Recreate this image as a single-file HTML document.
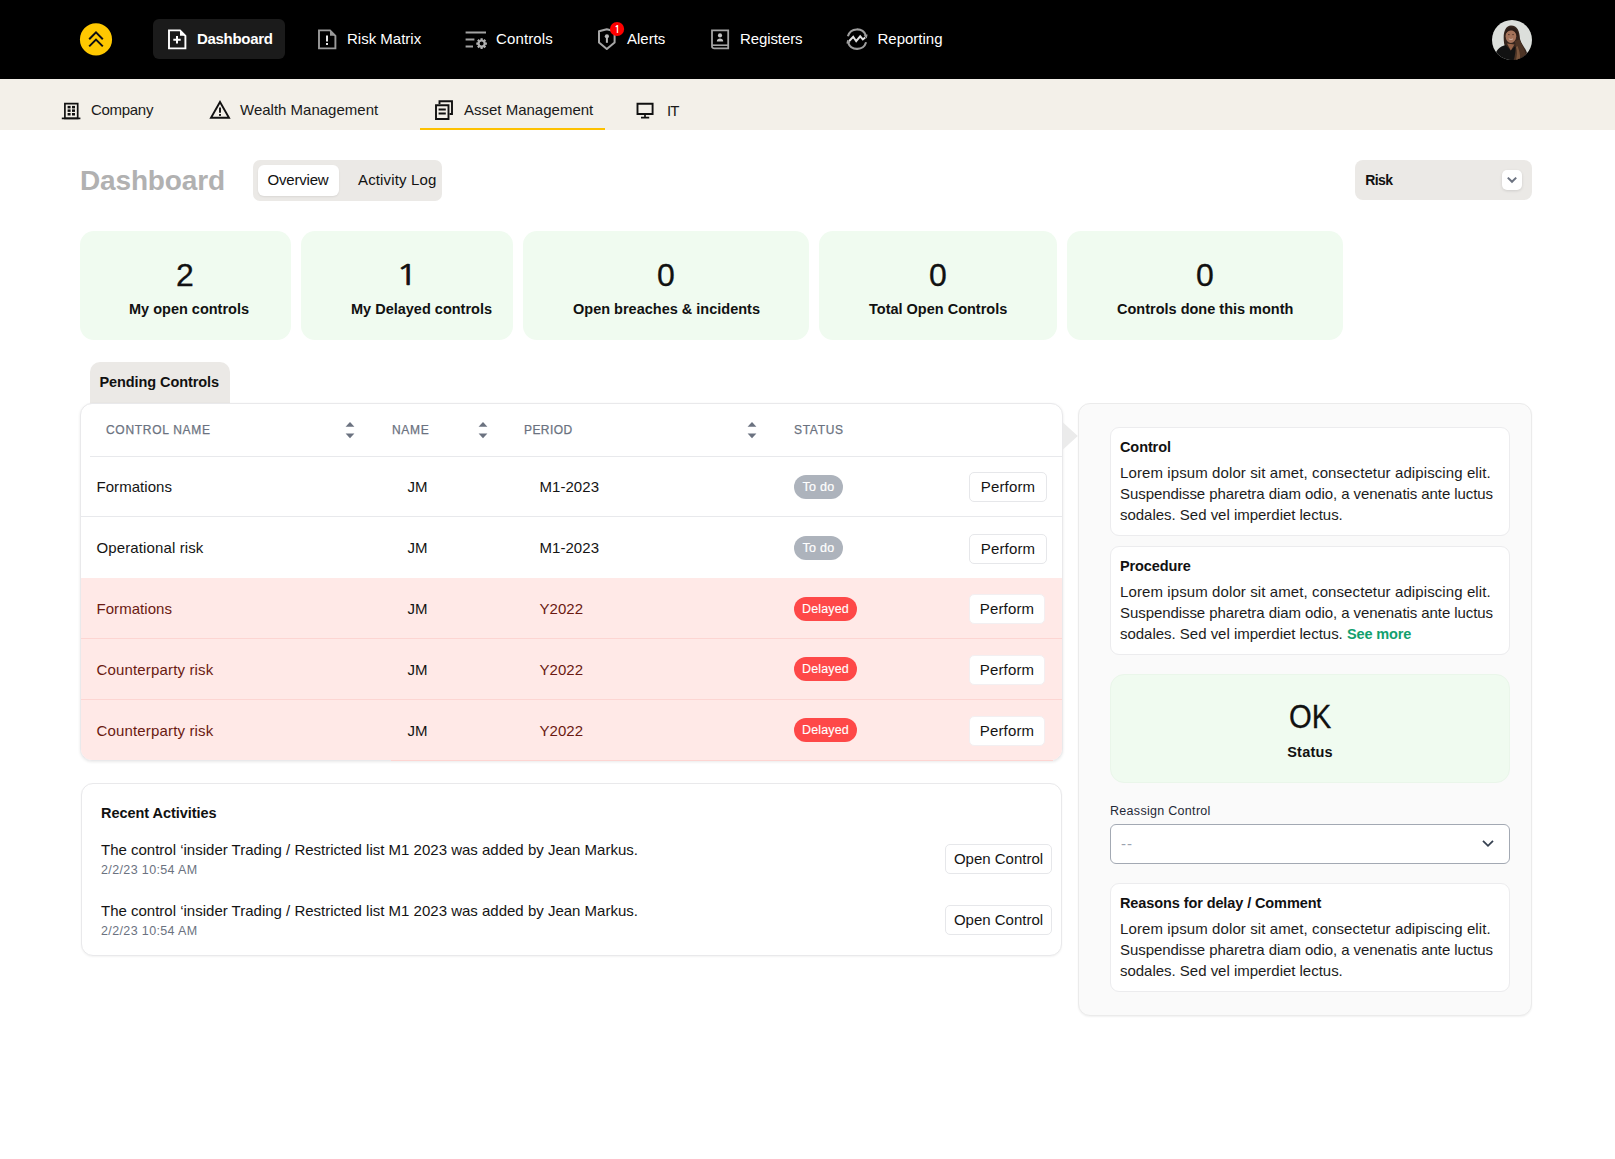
<!DOCTYPE html>
<html lang="en">
<head>
<meta charset="utf-8">
<title>Dashboard</title>
<style>
*{box-sizing:border-box;margin:0;padding:0}
html,body{width:1615px;height:1159px;overflow:hidden;background:#fff}
body{font-family:"Liberation Sans",Arial,sans-serif;color:#111;position:relative;font-size:15px}
.abs{position:absolute}
.t{position:absolute;white-space:nowrap;line-height:20px}
/* header */
#hdr{left:0;top:0;width:1615px;height:79px;background:#000}
#logo{left:80px;top:23px;width:32px;height:33px;overflow:visible}
.nav{color:#fff;font-size:15px;letter-spacing:0;top:29px}
.nav.b{font-weight:700;letter-spacing:-.3px}
#navact{left:153px;top:19px;width:132px;height:40px;border-radius:6px;background:#1b1b1b}
.ico{position:absolute}
/* sub nav */
#sub{left:0;top:79px;width:1615px;height:51px;background:#f3f0e9}
.sn{color:#1a1a1a;font-size:15px;letter-spacing:0;top:100px}
#sul{left:420px;top:128px;width:185px;height:2px;background:#fdc100}

/* main */
#ttl{left:80px;top:167px;font-size:28px;font-weight:700;color:#b1b1b1;line-height:28px;letter-spacing:-.15px}
#seg{left:253px;top:160px;width:189px;height:41px;border-radius:7px;background:#ebe9e6}
#segw{left:258px;top:165px;width:81px;height:31px;border-radius:6px;background:#fff;box-shadow:0 1px 2px rgba(0,0,0,.08)}
.f15{font-size:15px;line-height:15px}
.f145{font-size:14.500px;line-height:15px}
.bd{font-weight:700}
#rsk{left:1355px;top:160px;width:177px;height:40px;border-radius:8px;background:#ebe9e6}
#rskc{left:1502px;top:170px;width:20px;height:20px;border-radius:5px;background:#fff;box-shadow:0 1px 3px rgba(0,0,0,.12)}
.card{position:absolute;top:231px;height:109px;border-radius:14px;background:#f0fbf0}
.num{position:absolute;font-size:32px;line-height:32px;top:259px;text-align:center;color:#111;-webkit-text-stroke:.3px #111}
.lbl{position:absolute;font-size:14.500px;line-height:15px;font-weight:700;top:302px;white-space:nowrap;color:#111}

/* table */
#ptab{left:90px;top:362px;width:140px;height:44px;border-radius:10px 10px 0 0;background:#ebe9e6}
#tbl{left:80px;top:403px;width:983px;height:358px;border:1px solid #e9e9eb;border-radius:12px;background:#fff;box-shadow:0 1px 3px rgba(0,0,0,.09);overflow:hidden}
.pk{position:absolute;left:0;width:983px;background:#ffe9e7}
.ln{position:absolute;height:1px;background:#e8e9ec}
.lnp{position:absolute;height:1px;background:#fdd5d2;left:81px;width:981px}
.th{position:absolute;white-space:nowrap;font-size:12px;line-height:13px;top:424px;color:#6b7280;letter-spacing:.7px;font-weight:400;-webkit-text-stroke:.25px #6b7280}
.td{position:absolute;white-space:nowrap;font-size:15px;line-height:15px;color:#141414;letter-spacing:.05px}
.td.r{color:#6a1a12}
.bdg{position:absolute;height:24px;border-radius:12px;color:#fff;font-size:12.500px;line-height:24px;text-align:center;letter-spacing:.3px;white-space:nowrap}
.bdg.g{background:#adb3bc;width:49px;left:794px;-webkit-text-stroke:.2px #fff}
.bdg.d{background:#fe4848;width:63px;left:794px;letter-spacing:.15px;-webkit-text-stroke:.12px #fff}
.btn{position:absolute;height:30px;border-radius:5px;background:#fff;border:1px solid #e6e7ea;font-size:15px;line-height:28px;text-align:center;color:#141414;letter-spacing:.15px;white-space:nowrap}
.btn.oc{letter-spacing:0}
.btn.p{border-color:#f3eff1}

/* recent */
#rec{left:81px;top:783px;width:981px;height:173px;border:1px solid #e9e9eb;border-radius:12px;background:#fff;box-shadow:0 1px 2px rgba(0,0,0,.05)}
.dt{position:absolute;white-space:nowrap;font-size:12.500px;line-height:13px;color:#6b7280;letter-spacing:.37px;left:101px}
/* right panel */
#pan{left:1078px;top:403px;width:454px;height:613px;border:1px solid #ebebeb;border-radius:12px;background:#fafafa;box-shadow:0 1px 2px rgba(0,0,0,.06)}
.ic{position:absolute;left:1110px;width:400px;height:109px;border:1px solid #ececee;border-radius:9px;background:#fff}
.ih{position:absolute;left:1120px;white-space:nowrap;font-size:14.500px;line-height:15px;font-weight:700;color:#111;letter-spacing:-.1px}
.ib{position:absolute;left:1120px;white-space:nowrap;font-size:15px;line-height:21px;color:#1c1c1c;letter-spacing:.1px}
.ib i{font-style:normal;letter-spacing:-.07px}
.ib b{font-weight:400;letter-spacing:-.02px}
#okc{left:1110px;top:674px;width:400px;height:109px;border-radius:14px;background:#f0fbf0;border:1px solid #eaf6ea}
#sel{left:1110px;top:824px;width:400px;height:40px;border:1px solid #a3a9b3;border-radius:6px;background:#fff}
</style>
</head>
<body>
<!-- HEADER -->
<div id="hdr" class="abs"></div>
<div id="sub" class="abs"></div>
<svg id="logo" class="abs" viewBox="0 0 32 33"><circle cx="16" cy="16.400" r="16.050" fill="#ffc800"/><path d="M9.200 16.200 16 9.400 22.800 16.200M9.200 23.400 16 16.600 22.800 23.400" fill="none" stroke="#0d0d14" stroke-width="2" stroke-linejoin="miter"/></svg>
<div id="navact" class="abs"></div>
<div class="t nav b" style="left:197px">Dashboard</div>
<div class="t nav" style="left:347px">Risk Matrix</div>
<div class="t nav" style="left:496px;letter-spacing:.12px">Controls</div>
<div class="t nav" style="left:627px">Alerts</div>
<div class="t nav" style="left:740px;letter-spacing:-.1px">Registers</div>
<div class="t nav" style="left:877.500px">Reporting</div>

<!-- header icons -->
<svg class="ico" style="left:167px;top:28px" width="20" height="22" viewBox="0 0 20 22"><path d="M2 2.400H13L18.400 7.800V20.400H2Z" fill="none" stroke="#fff" stroke-width="1.900" stroke-linejoin="miter"/><path d="M13 2.400V7.800H18.400Z" fill="#fff"/><path d="M10 8v7.400M6.300 11.700h7.400" stroke="#fff" stroke-width="2" fill="none"/></svg>
<svg class="ico" style="left:317px;top:28px" width="20" height="22" viewBox="0 0 20 22"><path d="M2 2.400H13L18.400 7.800V20.400H2Z" fill="none" stroke="#9a9a9a" stroke-width="1.900"/><path d="M13 2.400V7.800H18.400Z" fill="#9a9a9a"/><path d="M10 7.500v6" stroke="#e6e6e6" stroke-width="2" fill="none"/><rect x="9" y="15" width="2" height="2" fill="#e6e6e6"/></svg>
<svg class="ico" style="left:464px;top:29px" width="26" height="22" viewBox="0 0 26 22"><path d="M1.600 3.400H22M1.600 10.600H10.400M1.600 17.400H9" stroke="#a3a3a3" stroke-width="2" fill="none"/><g transform="translate(17.600 14.600)"><circle r="3.100" fill="none" stroke="#b2b2b2" stroke-width="2.200"/><g stroke="#b2b2b2" stroke-width="2.200"><path d="M0-5.300V-3.500M0 5.300V3.500M-5.300 0H-3.500M5.300 0H3.500M-3.750-3.750-2.500-2.500M3.750 3.750 2.500 2.500M-3.750 3.750-2.500 2.500M3.750-3.750 2.500-2.500"/></g></g></svg>
<svg class="ico" style="left:596px;top:20px" width="30" height="32" viewBox="0 0 30 32"><path d="M10.800 9.300 18.600 11.300V22.400L10.800 29 3 22.400V11.300Z" fill="none" stroke="#a6a6a6" stroke-width="2" stroke-linejoin="round"/><circle cx="10.900" cy="16.300" r="2.100" fill="#b8b8b8"/><path d="M10.900 17v5.800" stroke="#b8b8b8" stroke-width="2"/><circle cx="21.060" cy="9" r="7.100" fill="#fe0000"/></svg>
<div class="t" style="left:613.200px;top:24px;width:8px;text-align:center;color:#fff;font-family:'NanumGothic','Liberation Sans',sans-serif;font-weight:700;font-size:10px;line-height:12px">1</div>
<svg class="ico" style="left:710px;top:28px" width="20" height="22" viewBox="0 0 20 22"><path d="M2 2.300H18.200V20.400H4.200C3 20.400 2 19.600 2 18.400Z" fill="none" stroke="#a3a3a3" stroke-width="1.800"/><path d="M2 17.200H18.200" stroke="#a3a3a3" stroke-width="1.600"/><circle cx="10" cy="7.400" r="2.100" fill="#c4c4c4"/><path d="M6.800 13.600C6.800 11.400 8.400 10.600 10 10.600 11.600 10.600 13.200 11.400 13.200 13.600Z" fill="#c4c4c4"/></svg>
<svg class="ico" style="left:845px;top:27px" width="24" height="24" viewBox="0 0 24 24"><path d="M2.900 9.200A9.500 9.500 0 0 1 20.900 8.600M21.100 15.200A9.500 9.500 0 0 1 3.100 15.600" fill="none" stroke="#9e9e9e" stroke-width="2.100"/><path d="M18.600 8.400 22.600 7.600 21.800 11.400Z M5.400 15.800 1.400 16.600 2.200 12.800Z" fill="#9e9e9e"/><path d="M4 14.200 8.200 9.800 11.200 14.200 15.200 9.400 17.800 12.400 20.200 10.400" fill="none" stroke="#e0e0e0" stroke-width="2" stroke-linejoin="miter"/></svg>
<!-- avatar -->
<svg class="ico" style="left:1492px;top:19.500px" width="40" height="40" viewBox="0 0 40 40"><defs><clipPath id="av"><circle cx="20" cy="20" r="20"/></clipPath></defs><g clip-path="url(#av)"><rect width="40" height="40" fill="#dcdfdb"/><path d="M12.200 24C10.500 13 13 6 19 5.600 25.500 5.600 27.500 11 28 19 29.500 25 33.500 27.500 35 33L36 42H18Z" fill="#35251d"/><ellipse cx="18.900" cy="16.200" rx="5.300" ry="6.700" fill="#a5735a"/><path d="M13.300 15C13 9 16.500 7.600 19.500 7.600 23.500 7.600 26 10.500 26.500 18 24.500 12.500 22 10.200 18.500 10.400 15.800 10.600 14 12.500 13.300 15Z" fill="#2a1c16"/><path d="M16.800 18.900Q18.900 20.300 21 18.900" stroke="#dcc9bf" stroke-width=".7" fill="none"/><path d="M16.100 14.600h1.500M20.300 14.600h1.500" stroke="#3a261d" stroke-width=".8"/><path d="M2 40C3 30 8 26.500 13.500 25L18.800 30.500 23 26.500 30 28 36 42Z" fill="#121212"/><path d="M15 23.500 18.800 30.500 22.500 24.500Q18.800 24 15 23.500Z" fill="#946348"/><path d="M22.600 21C24.500 26 23.500 34 21.500 41H34C34.500 31 30.500 26.500 27.500 19.500Z" fill="#4d3425"/><path d="M24 27C25.500 31 25 36 24 40H28C28.500 34 27 30 25.500 26Z" fill="#7a553c"/></g></svg>
<!-- subnav icons -->
<svg class="ico" style="left:61px;top:101px" width="20" height="19" viewBox="0 0 20 19"><path d="M3.900 2.700H16.700V17.300H3.900Z" fill="none" stroke="#111" stroke-width="1.700"/><path d="M.8 17.400H19.400" stroke="#111" stroke-width="1.700"/><g fill="#111"><rect x="6.6" y="4.9" width="3" height="2.500"/><rect x="6.6" y="8.4" width="3" height="2.500"/><rect x="6.6" y="12" width="3" height="2.500"/><rect x="11" y="4.9" width="3" height="2.500"/><rect x="11" y="8.4" width="3" height="2.500"/><rect x="11" y="12" width="3" height="2.500"/></g></svg>
<svg class="ico" style="left:208px;top:99px" width="24" height="21" viewBox="0 0 24 21"><path d="M12 3 21 18.800H3Z" fill="none" stroke="#111" stroke-width="1.900" stroke-linejoin="miter"/><path d="M12 8.600V13.800" stroke="#111" stroke-width="1.900"/><rect x="11.050" y="15" width="1.900" height="1.900" fill="#111"/></svg>
<svg class="ico" style="left:434px;top:99px" width="20" height="22" viewBox="0 0 20 22"><path d="M5.500 5V2.200H18V15H15.500" fill="none" stroke="#111" stroke-width="1.900"/><path d="M2 6.200H14.500V20H2Z" fill="none" stroke="#111" stroke-width="1.900"/><path d="M4.600 10.500H11.800M4.600 14.500H11.800" stroke="#111" stroke-width="1.800"/></svg>
<svg class="ico" style="left:635px;top:101px" width="20" height="19" viewBox="0 0 20 19"><path d="M2.500 2.700H17.600V13H2.500Z" fill="none" stroke="#111" stroke-width="1.900"/><path d="M10 13V16.600M6 16.700H14.200" stroke="#111" stroke-width="1.700"/></svg>
<!-- SUBNAV -->
<div class="t sn" style="left:91px;letter-spacing:-.3px">Company</div>
<div class="t sn" style="left:240px">Wealth Management</div>
<div class="t sn" style="left:464px">Asset Management</div>
<div class="t sn" style="left:667px;top:101px;letter-spacing:-1px">IT</div>
<div id="sul" class="abs"></div>

<div id="ttl" class="t">Dashboard</div>
<div id="seg" class="abs"></div><div id="segw" class="abs"></div>
<div class="t f15" style="left:267.500px;top:172px;letter-spacing:-.2px">Overview</div>
<div class="t f15" style="left:358px;top:172px;letter-spacing:.15px">Activity Log</div>
<div id="rsk" class="abs"></div><div id="rskc" class="abs"></div>
<div class="t bd" style="left:1365.300px;top:173px;font-size:14px;line-height:15px;letter-spacing:-.6px">Risk</div>
<svg class="ico" style="left:1502px;top:170px" width="20" height="20" viewBox="0 0 20 20"><path d="M5.800 7.600 10 11.800 14.200 7.600" fill="none" stroke="#6b7280" stroke-width="2"/></svg>
<!-- stat cards -->
<div class="card" style="left:80px;width:211px"></div>
<div class="card" style="left:301px;width:212px"></div>
<div class="card" style="left:523px;width:286px"></div>
<div class="card" style="left:819px;width:238px"></div>
<div class="card" style="left:1067px;width:276px"></div>
<div class="num" style="left:165px;width:40px">2</div>
<div class="num" style="width:40px;font-family:'NanumGothic','Liberation Sans',sans-serif;font-size:28.500px;top:259px;left:387px;-webkit-text-stroke:.6px #111;transform:scaleX(1.300)">1</div>
<div class="num" style="left:646px;width:40px">0</div>
<div class="num" style="left:918px;width:40px">0</div>
<div class="num" style="left:1185px;width:40px">0</div>
<div class="lbl" style="left:129px">My open controls</div>
<div class="lbl" style="left:351px">My Delayed controls</div>
<div class="lbl" style="left:573px">Open breaches &amp; incidents</div>
<div class="lbl" style="left:869px">Total Open Controls</div>
<div class="lbl" style="left:1117px">Controls done this month</div>

<div id="ptab" class="abs"></div>
<div class="t f145 bd" style="left:99.500px;top:375px;letter-spacing:-.09px">Pending Controls</div>
<div id="tbl" class="abs"><div class="pk" style="top:174px;height:190px"></div></div>
<div class="ln" style="left:90px;top:456px;width:972px"></div>
<div class="ln" style="left:81px;top:516px;width:981px"></div>
<div class="lnp" style="top:638px"></div>
<div class="lnp" style="top:699px"></div>
<div class="lnp" style="top:760px;left:391px;width:662px"></div>
<div class="th" style="left:106px">CONTROL NAME</div>
<div class="th" style="left:392px">NAME</div>
<div class="th" style="left:524px;letter-spacing:.42px">PERIOD</div>
<div class="th" style="left:794px">STATUS</div>
<svg class="ico" style="left:344px;top:421px" width="12" height="18" viewBox="0 0 12 18"><path d="M6 1 10.400 5.800H1.600Z" fill="#6b7280"/><path d="M6 17.200 10.400 12.400H1.600Z" fill="#6b7280"/></svg><svg class="ico" style="left:477px;top:421px" width="12" height="18" viewBox="0 0 12 18"><path d="M6 1 10.400 5.800H1.600Z" fill="#6b7280"/><path d="M6 17.200 10.400 12.400H1.600Z" fill="#6b7280"/></svg><svg class="ico" style="left:746px;top:421px" width="12" height="18" viewBox="0 0 12 18"><path d="M6 1 10.400 5.800H1.600Z" fill="#6b7280"/><path d="M6 17.200 10.400 12.400H1.600Z" fill="#6b7280"/></svg>
<div class="td" style="left:96.500px;top:479px">Formations</div><div class="td" style="left:407.500px;top:479px">JM</div><div class="td" style="left:539.500px;top:479px">M1-2023</div>
<div class="bdg g" style="top:475px">To do</div><div class="btn" style="left:969px;width:78px;top:472px">Perform</div>
<div class="td" style="left:96.500px;top:540px;letter-spacing:.12px">Operational risk</div><div class="td" style="left:407.500px;top:540px">JM</div><div class="td" style="left:539.500px;top:540px">M1-2023</div>
<div class="bdg g" style="top:536px">To do</div><div class="btn" style="left:969px;width:78px;top:534px">Perform</div>
<div class="td r" style="left:96.500px;top:601px">Formations</div><div class="td" style="left:407.500px;top:601px">JM</div><div class="td r" style="left:539.500px;top:601px">Y2022</div>
<div class="bdg d" style="top:597px">Delayed</div><div class="btn p" style="left:969px;width:76px;top:594px">Perform</div>
<div class="td r" style="left:96.500px;top:662px;letter-spacing:.16px">Counterparty risk</div><div class="td" style="left:407.500px;top:662px">JM</div><div class="td r" style="left:539.500px;top:662px">Y2022</div>
<div class="bdg d" style="top:657px">Delayed</div><div class="btn p" style="left:969px;width:76px;top:654.5px">Perform</div>
<div class="td r" style="left:96.500px;top:723px;letter-spacing:.16px">Counterparty risk</div><div class="td" style="left:407.500px;top:723px">JM</div><div class="td r" style="left:539.500px;top:723px">Y2022</div>
<div class="bdg d" style="top:718px">Delayed</div><div class="btn p" style="left:969px;width:76px;top:715.5px">Perform</div>

<div id="rec" class="abs"></div>
<div class="t f145 bd" style="left:101px;top:806px;letter-spacing:-.05px">Recent Activities</div>
<div class="td" style="left:101px;top:842px;letter-spacing:0">The control ‘insider Trading / Restricted list M1 2023 was added by Jean Markus.</div>
<div class="dt" style="top:864px">2/2/23 10:54 AM</div>
<div class="td" style="left:101px;top:903px;letter-spacing:0">The control ‘insider Trading / Restricted list M1 2023 was added by Jean Markus.</div>
<div class="dt" style="top:925px">2/2/23 10:54 AM</div>
<div class="btn oc" style="left:945px;width:107px;top:844px">Open Control</div>
<div class="btn oc" style="left:945px;width:107px;top:905px">Open Control</div>
<!-- right panel -->
<div id="pan" class="abs"></div>
<svg class="ico" style="left:1062px;top:421px" width="17" height="30" viewBox="0 0 17 30"><path d="M1 1.500 15.800 15 1 28.500Z" fill="#ebebeb"/></svg>
<div class="ic" style="top:427px"></div>
<div class="ih" style="top:440px">Control</div>
<div class="ib" style="top:462px">Lorem ipsum dolor sit amet, consectetur adipiscing elit.<br><i>Suspendisse pharetra diam odio, a venenatis ante luctus</i><br><b>sodales. Sed vel imperdiet lectus.</b></div>
<div class="ic" style="top:546px"></div>
<div class="ih" style="top:559px">Procedure</div>
<div class="ib" style="top:581px">Lorem ipsum dolor sit amet, consectetur adipiscing elit.<br><i>Suspendisse pharetra diam odio, a venenatis ante luctus</i><br><b>sodales. Sed vel imperdiet lectus.</b> <span style="color:#12a06e;font-weight:700;font-size:14.500px;letter-spacing:-.14px">See more</span></div>
<div id="okc" class="abs"></div>
<div class="t" style="left:1288.500px;top:701px;font-size:32.500px;line-height:33px;color:#111;transform:scaleX(.9);transform-origin:0 0;-webkit-text-stroke:.3px #111">OK</div>
<div class="t f145 bd" style="left:1110px;width:400px;text-align:center;top:745px;letter-spacing:.2px">Status</div>
<div class="dt" style="left:1110px;top:805px;color:#1f2937;letter-spacing:.3px">Reassign Control</div>
<div id="sel" class="abs"></div>
<div class="t f15" style="left:1121px;top:836px;color:#9ca3af;letter-spacing:1px">--</div>
<svg class="ico" style="left:1478px;top:834px" width="20" height="20" viewBox="0 0 20 20"><path d="M5 6.800 10 11.800 15 6.800" fill="none" stroke="#374151" stroke-width="1.800"/></svg>
<div class="ic" style="top:883px"></div>
<div class="ih" style="top:896px">Reasons for delay / Comment</div>
<div class="ib" style="top:918px">Lorem ipsum dolor sit amet, consectetur adipiscing elit.<br><i>Suspendisse pharetra diam odio, a venenatis ante luctus</i><br><b>sodales. Sed vel imperdiet lectus.</b></div>



</body>
</html>
